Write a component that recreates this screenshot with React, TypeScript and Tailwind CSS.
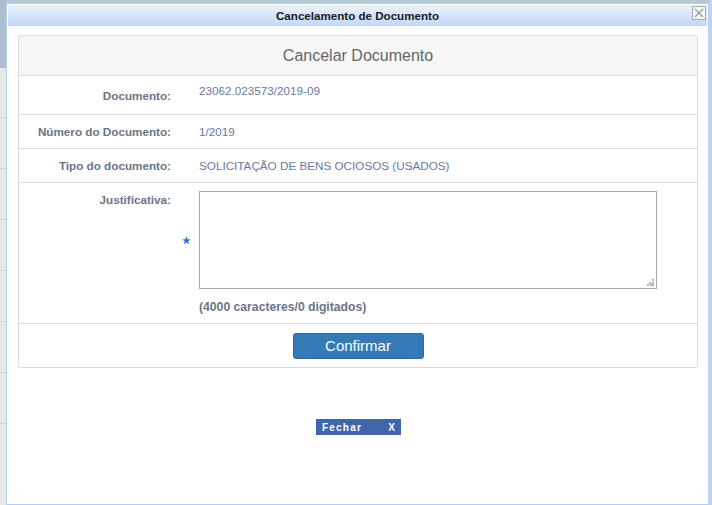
import React from "react";

const font = { fontFamily: '"Liberation Sans", Arial, sans-serif' };

function Star() {
  return (
    <svg width="9" height="9" viewBox="0 0 10 10">
      <polygon
        points="5,0.5 6.2,3.7 9.6,3.8 6.9,5.9 7.9,9.3 5,7.3 2.1,9.3 3.1,5.9 0.4,3.8 3.8,3.7"
        fill="#2f6fd6"
      />
    </svg>
  );
}

export default function App() {
  return (
    <div
      className="w-[712px] h-[505px] overflow-hidden flex bg-[#b6c7dc]"
      style={font}
    >
      {/* left background strip */}
      <div className="w-[6px] flex flex-col">
        <div className="h-[68px] bg-[#aebdd0]" />
        <div className="flex-1 bg-[#e7e7e7] flex flex-col">
          <div className="h-[50px] border-b border-[#d2d2d2]" />
          <div className="h-[51px] border-b border-[#d2d2d2]" />
          <div className="h-[51px] border-b border-[#d2d2d2]" />
          <div className="h-[51px] border-b border-[#d2d2d2]" />
          <div className="h-[51px] border-b border-[#d2d2d2]" />
          <div className="h-[51px] border-b border-[#d2d2d2]" />
          <div className="h-[51px] border-b border-[#d2d2d2]" />
        </div>
      </div>

      {/* window */}
      <div className="mt-[3px] w-[703px] h-[502px] border border-[#b5cff0] p-px bg-white flex flex-col">
        <div className="relative h-[21px] bg-gradient-to-b from-[#ecf2fd] to-[#c2d7f5] flex items-center justify-center">
          <span className="text-[11.6px] font-bold text-[#1a1a1a]">
            Cancelamento de Documento
          </span>
          <div className="absolute right-[1px] top-[1px] w-[14px] h-[14px] border border-[#a9a9a9] bg-[#f4f6f9] flex items-center justify-center">
            <svg width="10" height="10" viewBox="0 0 10 10">
              <path d="M1 1 L9 9 M9 1 L1 9" stroke="#9a9a9a" strokeWidth="1.3" />
            </svg>
          </div>
        </div>

        <div className="flex-1 flex flex-col pt-[9px] pl-[10px] pr-[9px]">
          {/* panel */}
          <div className="w-[680px] border border-[#dddddd] rounded-[2px]">
            <div className="h-[40px] bg-[#f6f6f6] border-b border-[#dddddd] flex items-center justify-center">
              <span className="text-[16px] text-[#666666]">Cancelar Documento</span>
            </div>

            <div className="grid grid-cols-[152px_28px_1fr] text-[11.7px] leading-[14px]">
              {/* Documento */}
              <div className="h-[39px] border-b border-[#dddddd] text-right font-bold text-[#6b7588] pt-[13px]">
                Documento:
              </div>
              <div className="border-b border-[#dddddd]" />
              <div className="border-b border-[#dddddd] text-[#6a79a0] pt-[8px]">
                23062.023573/2019-09
              </div>

              {/* Número */}
              <div className="h-[34px] border-b border-[#dddddd] text-right font-bold text-[#6b7588] flex items-center justify-end">
                Número do Documento:
              </div>
              <div className="border-b border-[#dddddd]" />
              <div className="border-b border-[#dddddd] text-[#6a79a0] flex items-center">
                1/2019
              </div>

              {/* Tipo */}
              <div className="h-[34px] border-b border-[#dddddd] text-right font-bold text-[#6b7588] flex items-center justify-end">
                Tipo do documento:
              </div>
              <div className="border-b border-[#dddddd]" />
              <div className="border-b border-[#dddddd] text-[#6a79a0] flex items-center">
                SOLICITAÇÃO DE BENS OCIOSOS (USADOS)
              </div>

              {/* Justificativa */}
              <div className="border-b border-[#dddddd] text-right font-bold text-[#6b7588] pt-[10px]">
                Justificativa:
              </div>
              <div className="border-b border-[#dddddd] pt-[8px]">
                <div className="h-[98px] flex items-center justify-end pr-[8px]">
                  <Star />
                </div>
              </div>
              <div className="border-b border-[#dddddd] pt-[8px] pb-[9px]">
                <div className="relative w-[458px] h-[98px] border border-[#a9a9a9] bg-white">
                  <svg
                    className="absolute right-[2px] bottom-[2px]"
                    width="7"
                    height="7"
                    viewBox="0 0 7 7"
                  >
                    <rect x="5" y="0" width="2" height="2" fill="#b0b0b0" />
                    <rect x="2" y="3" width="2" height="2" fill="#b0b0b0" />
                    <rect x="5" y="3" width="2" height="2" fill="#b0b0b0" />
                    <rect x="0" y="5" width="2" height="2" fill="#b0b0b0" />
                    <rect x="3" y="5" width="2" height="2" fill="#b0b0b0" />
                    <rect x="5" y="5" width="2" height="2" fill="#b0b0b0" />
                  </svg>
                </div>
                <div className="mt-[11px] text-[12.2px] font-bold text-[#6b7588]">
                  (4000 caracteres/0 digitados)
                </div>
              </div>
            </div>

            <div className="h-[43px] flex items-center justify-center">
              <button className="w-[131px] h-[26px] rounded-[3px] bg-[#337ab7] border border-[#2e6da4] text-white text-[15px] leading-none">
                Confirmar
              </button>
            </div>
          </div>

          <div className="mt-[51px] flex justify-center">
            <div className="ml-[1px] w-[85px] h-[16px] bg-[#3f66ab] flex items-center justify-between pl-[6px] pr-[5px] text-white text-[10px] font-bold tracking-[1.2px]">
              <span>Fechar</span>
              <span>X</span>
            </div>
          </div>
        </div>
      </div>

      {/* right background strip */}
      <div className="w-[3px] bg-[#c3d2e6]" />
    </div>
  );
}
